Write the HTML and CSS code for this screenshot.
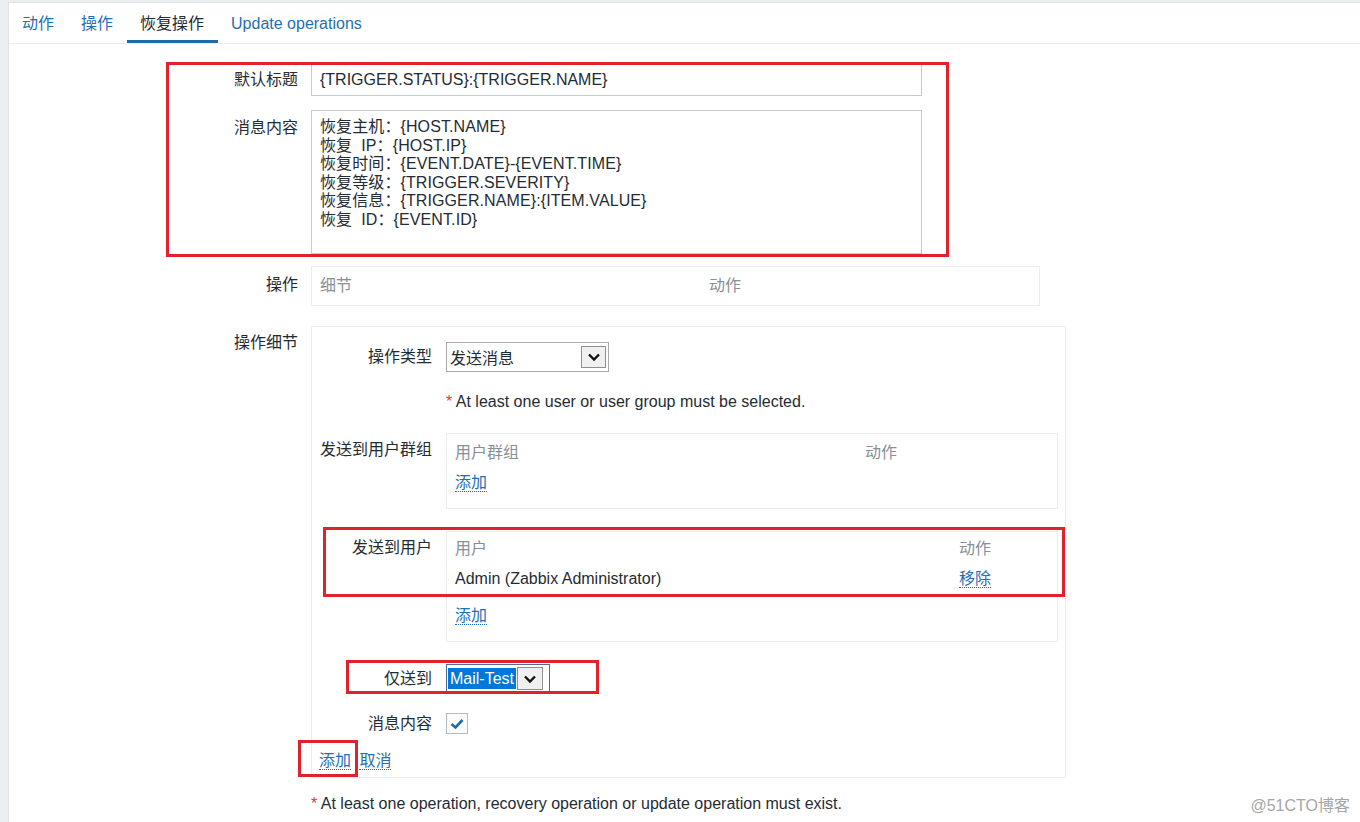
FILE: index.html
```html
<!DOCTYPE html>
<html lang="zh-CN">
<head>
    <meta charset="UTF-8">
    <title>恢复操作</title>
    <link rel="stylesheet" href="styles.css">
</head>
<body>

<div class="frame">
    <div class="panel">
        <ul class="tabs">
            <li><a href="#">动作</a></li>
            <li><a href="#">操作</a></li>
            <li class="active"><a href="#">恢复操作</a></li>
            <li><a href="#">Update operations</a></li>
        </ul>

        <div class="form-list">
            <label class="lbl">默认标题</label>
            <div class="field">
                <div class="input subject">{TRIGGER.STATUS}:{TRIGGER.NAME}</div>
            </div>

            <label class="lbl lbl-msg">消息内容</label>
            <div class="field">
                <div class="input message">恢复主机：{HOST.NAME}<br>恢复&nbsp; IP：{HOST.IP}<br>恢复时间：{EVENT.DATE}-{EVENT.TIME}<br>恢复等级：{TRIGGER.SEVERITY}<br>恢复信息：{TRIGGER.NAME}:{ITEM.VALUE}<br>恢复&nbsp; ID：{EVENT.ID}</div>
            </div>

            <label class="lbl lbl-ops">操作</label>
            <div class="field">
                <div class="box ops-box">
                    <div class="thead ops-cols">
                        <span>细节</span>
                        <span>动作</span>
                    </div>
                </div>
            </div>

            <label class="lbl lbl-detail">操作细节</label>
            <div class="field">
                <div class="box detail-box">
                    <div class="inner-list">
                        <label class="ilbl">操作类型</label>
                        <div class="select type-select">
                            <span class="select-text">发送消息</span>
                            <span class="select-btn">
                                <svg width="14" height="10" viewBox="0 0 14 10"><path d="M2 2.5 L7 7.5 L12 2.5" fill="none" stroke="#111" stroke-width="2.4"/></svg>
                            </span>
                        </div>

                        <div></div>
                        <div class="note"><span class="star">*</span> At least one user or user group must be selected.</div>

                        <label class="ilbl ilbl-box">发送到用户群组</label>
                        <div class="box list-box group-box">
                            <div class="thead group-cols">
                                <span>用户群组</span>
                                <span>动作</span>
                            </div>
                            <div class="add-row"><a href="#" class="link">添加</a></div>
                        </div>

                        <label class="ilbl ilbl-box">发送到用户</label>
                        <div class="box list-box user-box">
                            <div class="thead user-cols">
                                <span>用户</span>
                                <span>动作</span>
                            </div>
                            <div class="trow user-cols">
                                <span>Admin (Zabbix Administrator)</span>
                                <span><a href="#" class="link">移除</a></span>
                            </div>
                            <div class="add-row add-user"><a href="#" class="link">添加</a></div>
                        </div>

                        <label class="ilbl">仅送到</label>
                        <div class="select media-select">
                            <span class="select-text picked">Mail-Test</span>
                            <span class="select-btn">
                                <svg width="14" height="10" viewBox="0 0 14 10"><path d="M2 2.5 L7 7.5 L12 2.5" fill="none" stroke="#111" stroke-width="2.4"/></svg>
                            </span>
                        </div>

                        <label class="ilbl ilbl-check">消息内容</label>
                        <div class="checkbox">
                            <svg width="14" height="12" viewBox="0 0 14 12"><path d="M1.5 6 L5.5 9.5 L12.5 2" fill="none" stroke="#1f6ba8" stroke-width="2.6"/></svg>
                        </div>
                    </div>

                    <div class="actions">
                        <a href="#" class="link">添加</a>
                        <a href="#" class="link">取消</a>
                    </div>
                </div>
            </div>

            <div></div>
            <div class="note main-note"><span class="star">*</span> At least one operation, recovery operation or update operation must exist.</div>
        </div>

        <!-- annotation marks drawn over the form -->
        <div class="mark mark-1"></div>
        <div class="mark mark-2"></div>
        <div class="mark mark-3"></div>
        <div class="mark mark-4"></div>

        <div class="watermark">@51CTO博客</div>
    </div>
</div>

</body>
</html>
```

FILE: styles.css
```css
body {
    margin: 0;
    font-family: "Liberation Sans", Arial, "Noto Sans CJK SC", sans-serif;
    font-size: 16px;
    color: #1f2c33;
    background-color: #eceff1;
}

.frame {
    height: 822px;
    padding: 2px 0 0 8px;
    box-sizing: border-box;
    overflow: hidden;
}

.panel {
    position: relative;
    height: 100%;
    background: white;
    border-left: 1px solid #dfe3e6;
    border-top: 1px solid #e2e2e2;
}

a {
    color: #1f6fb2;
    text-decoration: none;
}

.link {
    border-bottom: 1px dotted #1f6fb2;
}

/* tabs */

.tabs {
    display: flex;
    margin: 0;
    padding: 0;
    list-style: none;
    height: 40px;
    border-bottom: 1px solid #ebeef0;
}

.tabs li {
    padding: 0 14px 0 13px;
    line-height: 41px;
}

.tabs li.active {
    border-bottom: 3px solid #1f6ba8;
}

.tabs li.active a {
    color: #1f2c33;
}

/* main form */

.form-list {
    display: grid;
    grid-template-columns: 289px auto;
    column-gap: 13px;
    align-items: start;
    padding-top: 20px;
}

.lbl, .ilbl {
    text-align: right;
    line-height: 20px;
    padding-top: 6px;
}

.lbl-msg {
    margin-top: 14px;
    padding-top: 8px;
}

.lbl-ops {
    margin-top: 12px;
    padding-top: 9px;
}

.lbl-detail {
    margin-top: 20px;
    padding-top: 7px;
}

.input {
    border: 1px solid #c6cbcf;
    box-sizing: border-box;
    width: 611px;
    padding: 0 8px;
}

.subject {
    height: 32px;
    line-height: 30px;
}

.message {
    height: 144px;
    margin-top: 14px;
    padding-top: 7px;
    line-height: 18.6px;
    letter-spacing: 0.1px;
}

.box {
    border: 1px solid #ebeef0;
    box-sizing: border-box;
}

.ops-box {
    width: 729px;
    height: 40px;
    margin-top: 12px;
    padding: 9px 8px 0;
}

.thead {
    color: #879097;
    line-height: 20px;
}

.ops-cols {
    display: grid;
    grid-template-columns: 389px auto;
}

.detail-box {
    width: 755px;
    height: 452px;
    margin-top: 20px;
    padding: 15px 7px 0;
}

/* operation details */

.inner-list {
    display: grid;
    grid-template-columns: 113px auto;
    column-gap: 14px;
    align-items: start;
}

.ilbl {
    padding-top: 5px;
    white-space: nowrap;
}

.ilbl-box {
    padding-top: 7px;
}

.ilbl-check {
    padding-top: 1px;
}

.select {
    display: flex;
    align-items: center;
    box-sizing: border-box;
    border: 1px solid #a9a9a9;
    background: white;
}

.type-select {
    width: 163px;
    height: 30px;
    padding: 0 2px 0 3px;
    justify-content: space-between;
}

.select-btn {
    display: flex;
    align-items: center;
    justify-content: center;
    width: 25px;
    height: 22px;
    border: 1px solid #8f8f8f;
    background: #f0f0f0;
    box-sizing: border-box;
}

.note {
    line-height: 20px;
    margin-top: 20px;
}

.star {
    color: #e33734;
}

.list-box {
    width: 612px;
    margin-top: 21px;
    padding: 9px 8px 15px;
}

.user-box {
    margin-top: 22px;
    padding-top: 7px;
}

.group-cols {
    display: grid;
    grid-template-columns: 410px auto;
}

.user-cols {
    display: grid;
    grid-template-columns: 504px auto;
}

.trow {
    line-height: 20px;
    margin-top: 10px;
}

.add-row {
    line-height: 20px;
    margin-top: 10px;
}

.add-user {
    margin-top: 17px;
}

.media-select {
    width: 104px;
    height: 29px;
    margin-top: 22px;
    border-color: #4d6f95;
    padding: 0 3px 0 1px;
}

.picked {
    background: #0078d7;
    color: white;
    line-height: 21px;
    padding: 0 2px;
    margin-right: 1px;
}

.media-select .select-btn {
    height: 23px;
    width: 26px;
}

.inner-list .media-select ~ .ilbl-check {
    margin-top: 20px;
}

.checkbox {
    width: 22px;
    height: 21px;
    margin-top: 20px;
    border: 1px solid #b5bcc1;
    box-sizing: border-box;
    background: #fbfbfb;
    display: flex;
    align-items: center;
    justify-content: center;
}

.inner-list > .ilbl:nth-of-type(3),
.inner-list > .ilbl:nth-of-type(4) {
    margin-top: 22px;
}

.inner-list > .ilbl:nth-of-type(2) {
    margin-top: 21px;
}

.actions {
    margin-top: 17px;
    line-height: 20px;
}

.actions a {
    margin-right: 4px;
}

.main-note {
    margin-top: 16px;
}

/* red annotation marks */

.mark {
    position: absolute;
    border: 3px solid #e0222c;
    box-sizing: border-box;
}

.mark-1 { left: 157px; top: 59px; width: 783px; height: 195px; }
.mark-2 { left: 314px; top: 524px; width: 742px; height: 70px; }
.mark-3 { left: 337px; top: 657px; width: 253px; height: 34px; }
.mark-4 { left: 289px; top: 737px; width: 60px; height: 37px; }

.watermark {
    position: absolute;
    right: 10px;
    bottom: 7px;
    color: #a6a6a6;
    font-size: 16px;
}
```
